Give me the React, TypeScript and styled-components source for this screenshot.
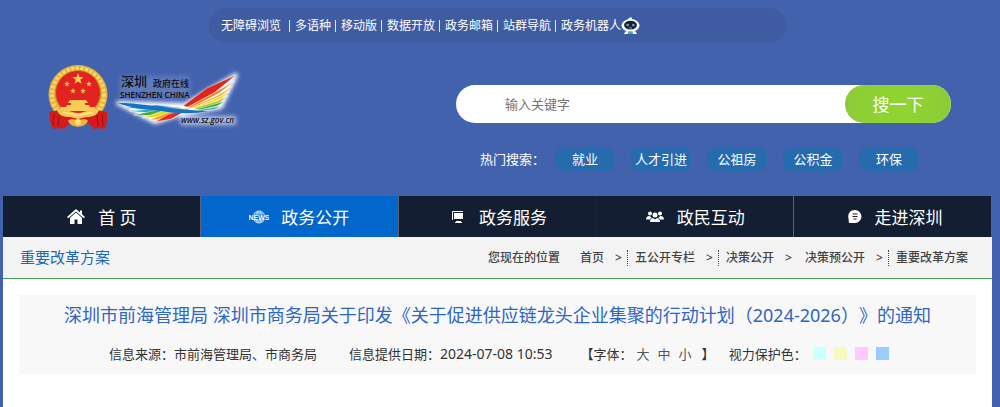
import React from "react";
import styled, { createGlobalStyle } from "styled-components";

const GlobalStyle = createGlobalStyle`
  * { box-sizing: border-box; }
  body {
    margin: 0;
    background: #4262ae;
    font-family: "Noto Sans", "Noto Sans CJK SC", sans-serif;
    font-size: 12px;
    color: #333;
    text-spacing-trim: space-all;
  }
  a { color: inherit; text-decoration: none; }
  button, input { font-family: inherit; }
`;

const Page = styled.div`
  display: flex;
  flex-direction: column;
  min-height: 100vh;
  padding: 8px 8px 0 3px;
`;

const UtilityBar = styled.nav`
  display: flex;
  align-items: center;
  width: 100%;
  max-width: 577px;
  height: 35px;
  margin: 0 auto;
  padding: 1px 0 0 12px;
  border-radius: 18px;
  background: #3f5ca2;
  color: #fff;
  white-space: nowrap;
`;

const UtilityLink = styled.a<{ $wide?: boolean }>`
  display: flex;
  align-items: center;
  line-height: 16px;
  &:not(:last-of-type)::after {
    content: "";
    width: 1px;
    height: 12px;
    margin: 0 5px 0 ${(p) => (p.$wide ? 8 : 4)}px;
    background: #dfe6f5;
  }
`;

const Masthead = styled.header`
  display: flex;
  justify-content: space-between;
  padding: 22px 41px 25px 45px;
`;

const Brand = styled.a`
  display: flex;
  gap: 8px;
  height: 66px;
`;

const SearchArea = styled.div`
  flex: 0 1 495px;
  padding-top: 20px;
`;

const SearchForm = styled.form`
  display: flex;
  height: 38px;
  border-radius: 19px;
  background: #fff;
`;

const SearchInput = styled.input`
  flex: 1;
  min-width: 0;
  padding: 0 0 0 49px;
  border: 0;
  outline: 0;
  background: transparent;
  font-size: 13px;
  &::placeholder { color: #757575; opacity: 1; }
`;

const SearchButton = styled.button`
  width: 106px;
  padding: 0 0 2px;
  border: 0;
  border-radius: 19px;
  background: radial-gradient(circle at 50% 60%, #90d631, #8cca38);
  color: #fff;
  font-size: 17px;
`;

const HotSearch = styled.div`
  display: flex;
  align-items: center;
  gap: 10px;
  margin-top: 25px;
  padding-left: 24px;
  color: #fff;
  font-size: 13px;
  line-height: 23px;
  white-space: nowrap;
`;

const HotTags = styled.div`
  display: flex;
  gap: 16px;
`;

const HotTag = styled.a`
  width: 60px;
  border-radius: 8px;
  background: #266bae;
  text-align: center;
`;

const MainNav = styled.nav`
  display: grid;
  grid-template-columns: repeat(5, 1fr);
  background: #141e33;
`;

const NavItem = styled.a<{ $active?: boolean; $divider?: string }>`
  display: flex;
  align-items: center;
  justify-content: center;
  gap: 12px;
  height: 41px;
  border-right: 1px solid ${(p) => p.$divider ?? "#5b6375"};
  background: ${(p) => (p.$active ? "#0167cc" : "transparent")};
  color: #fff;
  font-size: 17px;
  white-space: nowrap;
`;

const Content = styled.main`
  flex: 1;
  background: #fff;
`;

const LocationBar = styled.div`
  display: flex;
  align-items: center;
  justify-content: space-between;
  height: 42px;
  padding: 0 24px 0 17px;
  border-bottom: 1px solid #41a04f;
  background: #f3f3f3;
  white-space: nowrap;
`;

const SectionName = styled.h2`
  margin: 0;
  padding-bottom: 2px;
  color: #2168b3;
  font-size: 15px;
  font-weight: 400;
`;

const Crumbs = styled.div`
  display: flex;
  align-items: center;
  color: #444;
  font-weight: 500;
  line-height: 16px;
`;

const CrumbLabel = styled.span`
  margin-right: 20px;
`;

const CrumbArrow = styled.span<{ $dotted: boolean }>`
  width: 13px;
  margin: 0 7px 0 11px;
  border-right: 1px ${(p) => (p.$dotted ? "dotted #444" : "solid transparent")};
`;

const Article = styled.article`
  margin: 16px 16px 0;
  background: #f8f8f8;
`;

const Title = styled.h1`
  margin: 0;
  color: #2f66bf;
  font-size: 18px;
  font-weight: 400;
  line-height: 40px;
  text-align: center;
  white-space: nowrap;
`;

const Meta = styled.div`
  display: flex;
  align-items: center;
  height: 39px;
  padding: 0 0 2px 90px;
  font-size: 13px;
  white-space: nowrap;
`;

const MetaPart = styled.span<{ $gap: number }>`
  display: flex;
  align-items: center;
  margin-right: ${(p) => p.$gap}px;
`;

const MetaTime = styled.time`
  font-size: 14px;
`;

const SizeButtons = styled.span`
  display: flex;
  gap: 8px;
  margin: 0 10px 0 4px;
`;

const SizeButton = styled.button`
  padding: 0;
  border: 0;
  background: none;
  color: #555;
  font-size: 13px;
`;

const Swatches = styled.span`
  display: flex;
  gap: 8px;
  margin-left: 6px;
`;

const Swatch = styled.button<{ $color: string }>`
  width: 13px;
  height: 13px;
  padding: 0;
  border: 0;
  background: ${(p) => p.$color};
`;

const starPoints = (cx: number, cy: number, r: number) =>
  Array.from({ length: 10 }, (_, i) => {
    const a = (Math.PI / 5) * i - Math.PI / 2;
    const d = i % 2 ? r * 0.4 : r;
    return `${(cx + d * Math.cos(a)).toFixed(2)},${(cy + d * Math.sin(a)).toFixed(2)}`;
  }).join(" ");

const Emblem = () => (
  <svg width="61" height="66" viewBox="0 0 61 66" aria-hidden="true">
    <circle cx="30" cy="29.500" r="29.500" fill="#e3b03c" />
    <circle cx="30" cy="29.500" r="26" fill="none" stroke="#f7d768" strokeWidth="4" strokeDasharray="3 1.600" />
    <circle cx="30" cy="28" r="22.500" fill="#e2231f" stroke="#c98a22" strokeWidth="1" />
    <polygon points={starPoints(30, 14, 6)} fill="#fbd04c" />
    <polygon points={starPoints(19, 19, 3)} fill="#fbd04c" />
    <polygon points={starPoints(41, 19, 3)} fill="#fbd04c" />
    <polygon points={starPoints(25, 26, 3)} fill="#fbd04c" />
    <polygon points={starPoints(35, 26, 3)} fill="#fbd04c" />
    <path d="M22 35h16l2 3H20zM23 38h14v2H23zM19 40h22l1 2H18zM13 42h34v4H13z" fill="#f9cd55" />
    <path d="M1 47l10-2 8 6h22l8-6 10 2 0 9-2 8-6-1-5 1-5-5H21l-5 5-5-1-6 1-3-8z" fill="#d31b1b" />
    <path d="M6 49l-1 12M11 50l-1 11M54 49l1 12M49 50l1 11" stroke="#9c1111" strokeWidth="1" />
    <path d="M9 45c9-2 14 3 21 3s12-5 21-3c-2 6-7 7-13 7l-8 2-8-2c-6 0-11-1-13-7z" fill="#f5c84e" />
    <path d="M15 48c5-1 9 2 15 2s10-3 15-2" fill="none" stroke="#fbe79a" strokeWidth="1.500" />
    <path d="M20 56c3-3 6-1 10-1s7-2 10 1c-2 4-5 5-10 6-5-1-8-2-10-6z" fill="#edb637" />
    <circle cx="30" cy="57" r="3" fill="#f9e084" />
  </svg>
);

const wingRays: [string, string][] = [
  ["M119 10L90 23 66 41 71 42 97 28Z", "#e0251f"],
  ["M118 16L97 28 71 42 74 43 102 28Z", "#f07e1c"],
  ["M116 21L100 31 74 42 76 43 104 31Z", "#f6a81c"],
  ["M113 26L102 32 76 43 78 44 104 34Z", "#f5dc28"],
  ["M111 31L100 36 78 43 80 45 102 38Z", "#a5cb2c"],
  ["M108 36L98 39 80 44 82 45 100 41Z", "#35a047"],
  ["M104 41L94 43 80 45 84 46 98 44Z", "#22a29a"],
  ["M7 42L40 40 70 44 50 48Z", "#2488cf"],
  ["M12 46L64 42 46 49Z", "#27a6b8"],
  ["M17 50L40 45 68 43 44 51Z", "#43a845"],
  ["M25 53L45 46 70 43 46 52Z", "#e4dc2a"],
  ["M32 55L50 48 72 43 48 54Z", "#f29a1f"],
  ["M38 57L52 49 74 43 54 54Z", "#de2b20"],
];

const wingBody = "M1 38C18 37 48 44 91 46C78 49 60 49 44 46C26 44 10 42 1 38Z";

const SiteLogo = () => (
  <svg width="126" height="66" viewBox="0 0 126 66" role="img" aria-label="深圳政府在线" overflow="visible">
    <defs>
      <filter id="logoGlow" x="-20%" y="-20%" width="140%" height="140%">
        <feGaussianBlur stdDeviation="2" />
      </filter>
    </defs>
    <g filter="url(#logoGlow)" fill="#fff" stroke="#fff" strokeWidth="4" strokeLinejoin="round">
      <path d="M1 38L38 57 60 50 104 42 119 10 68 40Z" />
      <path d="M65 53h52v5H65z" opacity="0.600" />
      <path d="M5 13h66v18H5z" opacity="0.150" />
    </g>
    {wingRays.map(([d, color]) => (
      <path key={d} d={d} fill={color} stroke="#fff" strokeWidth="0.400" />
    ))}
    <path d={wingBody} fill="#1672c4" />
    <g fill="#0c0c14">
      <text x="4" y="21" fontSize="13" fontWeight="500">深圳</text>
      <text x="36" y="22" fontSize="9" fontWeight="500">政府在线</text>
      <text x="3" y="33" fontSize="8" fontWeight="600" fontFamily="Open Sans">SHENZHEN CHINA</text>
      <text x="64" y="58" fontSize="8" fontWeight="600" fontStyle="italic" fontFamily="Open Sans">www.sz.gov.cn</text>
    </g>
  </svg>
);

const Robot = () => (
  <svg width="19" height="18" viewBox="0 0 20 19" aria-hidden="true">
    <path d="M7 4L8 1l3-1 1 3z" fill="#dfeefa" />
    <ellipse cx="10" cy="9" rx="9.500" ry="6.800" fill="#fff" />
    <ellipse cx="10" cy="8.500" rx="6.800" ry="4.600" fill="#14202e" />
    <circle cx="7" cy="8.500" r="1.500" fill="#5f9fc2" />
    <circle cx="13" cy="8.500" r="1.500" fill="#5f9fc2" />
    <path d="M8.500 11.500h3" stroke="#e8a09d" strokeWidth="1" />
    <path d="M5 15h10l2 3H3z" fill="#fff" />
    <path d="M8 15h4l1 3H7z" fill="#4ba0df" />
  </svg>
);

const HomeIcon = () => (
  <svg width="20" height="16" viewBox="0 0 20 16" fill="#fff" aria-hidden="true">
    <path d="M10 0L1 8l1.200 1.200L10 2.600l7.800 6.600L19 8l-3-2.700V1.500h-2v2z" />
    <path d="M10 3.500L4 8.700V15h4.500v-4.500h3V15H16V8.700z" />
  </svg>
);

const NewsIcon = () => (
  <svg width="20" height="16" viewBox="0 0 20 16" aria-hidden="true">
    <circle cx="10" cy="8" r="6.500" fill="#cfe3f7" />
    <path d="M10 1v14M5 4h10M5 12h10M7.500 2c-2 3-2 9 0 12M12.500 2c2 3 2 9 0 12" stroke="#3f8bd8" strokeWidth="0.600" fill="none" />
    <path d="M0 5.500h20v5H0z" fill="#0167cc" />
    <text x="10" y="10.500" textAnchor="middle" fontSize="7" fontWeight="700" fill="#fff" fontFamily="Liberation Sans">NEWS</text>
  </svg>
);

const MonitorIcon = () => (
  <svg width="20" height="14" viewBox="0 0 20 14" aria-hidden="true">
    <path d="M5.500 10V1.500H16" stroke="#fff" strokeWidth="1" fill="none" />
    <path d="M7 3h9v6H7zM9 11h5v1h1v1H8v-1h1z" fill="#fff" />
  </svg>
);

const PeopleIcon = () => (
  <svg width="20" height="14" viewBox="0 0 20 14" fill="#fff" aria-hidden="true">
    <circle cx="5" cy="3.500" r="2" />
    <circle cx="15" cy="3.500" r="2" />
    <circle cx="10" cy="5" r="2.500" />
    <path d="M1 9.500c0-2.500 1.500-3.500 3.500-3.500l2 1.200-1.500 2.300zM19 9.500c0-2.500-1.500-3.500-3.500-3.500l-2 1.200 1.500 2.300zM5 12c0-3 1.500-4 3-4l2 1.500L12 8c1.500 0 3 1 3 4z" />
  </svg>
);

const ChatIcon = () => (
  <svg width="20" height="16" viewBox="0 0 20 16" aria-hidden="true">
    <path d="M12 1a6.500 6.500 0 1 1 0 13H6l-.5-4.500A6.500 6.500 0 0 1 12 1z" fill="#fff" />
    <path d="M9.500 5h5M9.500 7.500h5M10.500 10h3" stroke="#141e33" strokeWidth="1.200" />
  </svg>
);

const utilityLinks = ["无障碍浏览", "多语种", "移动版", "数据开放", "政务邮箱", "站群导航", "政务机器人"];
const hotTags = ["就业", "人才引进", "公祖房", "公积金", "环保"];
const navItems = [
  { label: "首 页", icon: <HomeIcon /> },
  { label: "政务公开", icon: <NewsIcon />, active: true },
  { label: "政务服务", icon: <MonitorIcon />, divider: "#1b253a" },
  { label: "政民互动", icon: <PeopleIcon /> },
  { label: "走进深圳", icon: <ChatIcon /> },
];
const crumbs = [
  { label: "首页", dotted: true },
  { label: "五公开专栏", dotted: true },
  { label: "决策公开", dotted: false },
  { label: "决策预公开", dotted: true },
  { label: "重要改革方案", dotted: false },
];
const swatches = [
  { color: "#ccffff", name: "青色" },
  { color: "#f7f9c3", name: "黄色" },
  { color: "#ffc8ff", name: "粉色" },
  { color: "#99ccff", name: "蓝色" },
];

export default function App() {
  return (
    <>
      <GlobalStyle />
      <Page>
        <UtilityBar>
          {utilityLinks.map((label, i) => (
            <UtilityLink key={label} href="#" $wide={i === 0}>{label}</UtilityLink>
          ))}
          <Robot />
        </UtilityBar>

        <Masthead>
          <Brand href="#">
            <Emblem />
            <SiteLogo />
          </Brand>
          <SearchArea>
            <SearchForm onSubmit={(e) => e.preventDefault()}>
              <SearchInput type="text" aria-label="搜索" placeholder="输入关键字" />
              <SearchButton type="submit">搜一下</SearchButton>
            </SearchForm>
            <HotSearch>
              <span>热门搜索：</span>
              <HotTags>
                {hotTags.map((tag) => (
                  <HotTag key={tag} href="#">{tag}</HotTag>
                ))}
              </HotTags>
            </HotSearch>
          </SearchArea>
        </Masthead>

        <MainNav>
          {navItems.map((item) => (
            <NavItem key={item.label} href="#" $active={item.active} $divider={item.divider}>
              {item.icon}
              <span>{item.label}</span>
            </NavItem>
          ))}
        </MainNav>

        <Content>
          <LocationBar>
            <SectionName>重要改革方案</SectionName>
            <Crumbs>
              <CrumbLabel>您现在的位置</CrumbLabel>
              {crumbs.map((crumb, i) => (
                <React.Fragment key={crumb.label}>
                  <a href="#">{crumb.label}</a>
                  {i < crumbs.length - 1 && <CrumbArrow $dotted={crumb.dotted}>&gt;</CrumbArrow>}
                </React.Fragment>
              ))}
            </Crumbs>
          </LocationBar>

          <Article>
            <Title>深圳市前海管理局 深圳市商务局关于印发《关于促进供应链龙头企业集聚的行动计划（2024-2026）》的通知</Title>
            <Meta>
              <MetaPart $gap={32}>信息来源：市前海管理局、市商务局</MetaPart>
              <MetaPart $gap={28}>
                信息提供日期：<MetaTime dateTime="2024-07-08T10:53">2024-07-08 10:53</MetaTime>
              </MetaPart>
              <MetaPart $gap={14}>
                【字体：
                <SizeButtons>
                  <SizeButton type="button">大</SizeButton>
                  <SizeButton type="button">中</SizeButton>
                  <SizeButton type="button">小</SizeButton>
                </SizeButtons>
                】
              </MetaPart>
              <MetaPart $gap={0}>
                视力保护色：
                <Swatches>
                  {swatches.map((s) => (
                    <Swatch key={s.color} type="button" $color={s.color} aria-label={s.name} />
                  ))}
                </Swatches>
              </MetaPart>
            </Meta>
          </Article>
        </Content>
      </Page>
    </>
  );
}
